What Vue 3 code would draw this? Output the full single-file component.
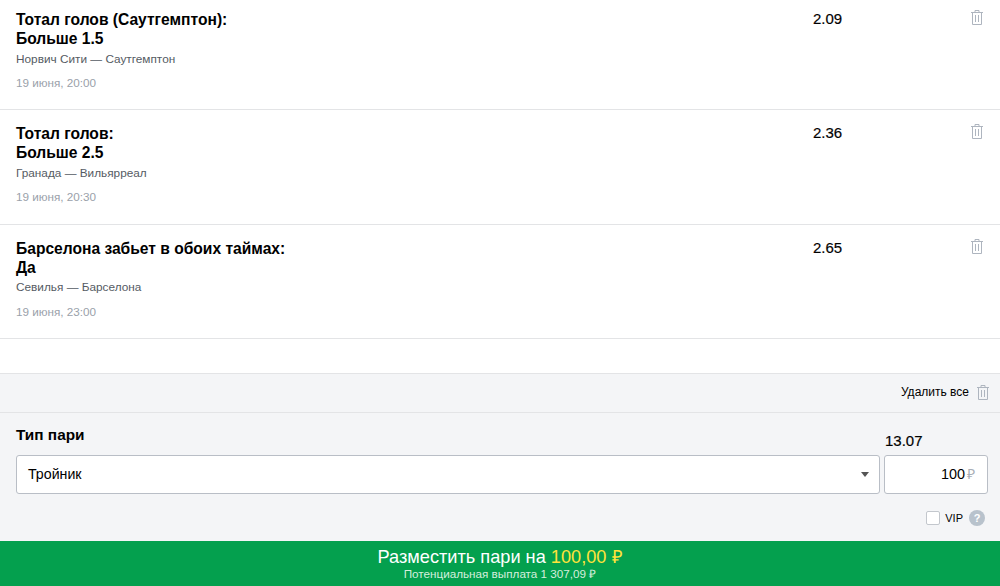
<script setup>
const bets = [
  { title: 'Тотал голов (Саутгемптон):', pick: 'Больше 1.5', match: 'Норвич Сити — Саутгемптон', date: '19 июня, 20:00', odds: '2.09' },
  { title: 'Тотал голов:', pick: 'Больше 2.5', match: 'Гранада — Вильярреал', date: '19 июня, 20:30', odds: '2.36' },
  { title: 'Барселона забьет в обоих таймах:', pick: 'Да', match: 'Севилья — Барселона', date: '19 июня, 23:00', odds: '2.65' }
]
</script>

<template>
  <div class="slip">
    <div class="list">
      <div v-for="bet in bets" :key="bet.title" class="bet">
        <div class="info">
          <div class="title">{{ bet.title }}<br>{{ bet.pick }}</div>
          <div class="match">{{ bet.match }}</div>
          <div class="date">{{ bet.date }}</div>
        </div>
        <div class="odds">{{ bet.odds }}</div>
        <svg class="trash" width="12" height="15" viewBox="0 0 12 15" fill="none" stroke="#aeb5bf" stroke-width="1">
          <path d="M0 2.5H12M4 2.5V0.5H8V2.5M1.5 2.5V14.5H10.5V2.5M4.5 5V12M7.5 5V12" />
        </svg>
      </div>
    </div>
    <div class="spacer"></div>
    <div class="clear-row">
      <span>Удалить все</span>
      <svg width="12" height="15" viewBox="0 0 12 15" fill="none" stroke="#aeb5bf" stroke-width="1">
        <path d="M0 2.5H12M4 2.5V0.5H8V2.5M1.5 2.5V14.5H10.5V2.5M4.5 5V12M7.5 5V12" />
      </svg>
    </div>
    <div class="form">
      <div class="labels">
        <span class="type-label">Тип пари</span>
        <span class="total">13.07</span>
      </div>
      <div class="inputs">
        <div class="select">
          <span>Тройник</span>
          <i class="arrow"></i>
        </div>
        <div class="amount">100<span class="rub">₽</span></div>
      </div>
      <div class="vip">
        <i class="check"></i>
        <span>VIP</span>
        <i class="help">?</i>
      </div>
    </div>
    <div class="place">
      <div class="place-main">Разместить пари на <span class="sum">100,00 ₽</span></div>
      <div class="place-sub">Потенциальная выплата 1 307,09 ₽</div>
    </div>
  </div>
</template>

<style scoped>
.slip {
  width: 1000px;
  height: 586px;
  display: flex;
  flex-direction: column;
  overflow: hidden;
  background: #fff;
  color: #000;
  font-family: "Liberation Sans", Arial, sans-serif;
}
.list {
  margin-top: -4px;
}
.bet {
  height: 114.4px;
  box-sizing: border-box;
  border-bottom: 1px solid #e3e4e6;
  display: flex;
  align-items: flex-start;
  padding: 14px 16px 0;
  position: relative;
}
.info {
  width: 797px;
}
.title {
  font-size: 15.6px;
  font-weight: 700;
  line-height: 19px;
}
.match {
  font-size: 11.8px;
  line-height: 16px;
  margin-top: 2.5px;
  color: #555b63;
}
.date {
  font-size: 11.7px;
  line-height: 16px;
  margin-top: 8.5px;
  color: #9aa1aa;
}
.odds {
  font-size: 15px;
  line-height: 18px;
  -webkit-text-stroke: 0.2px #111;
}
.trash {
  position: absolute;
  right: 17px;
  top: 14px;
}
.spacer {
  height: 34px;
}
.clear-row {
  height: 40px;
  box-sizing: border-box;
  background: #f4f5f7;
  border-top: 1px solid #e3e4e6;
  border-bottom: 1px solid #e3e4e6;
  display: flex;
  align-items: center;
  justify-content: flex-end;
  gap: 8px;
  padding: 0 11px 2px 0;
  font-size: 12px;
}
.form {
  flex: 1;
  background: #f4f5f7;
  padding: 0 12px 0 16px;
}
.labels {
  display: flex;
  justify-content: space-between;
  height: 42px;
  align-items: flex-start;
}
.type-label {
  font-size: 15.4px;
  font-weight: 700;
  margin-top: 13px;
}
.total {
  font-size: 15px;
  width: 103px;
  margin-top: 19px;
  -webkit-text-stroke: 0.2px #111;
}
.inputs {
  display: flex;
  gap: 4px;
}
.select,
.amount {
  height: 39px;
  box-sizing: border-box;
  background: #fff;
  border: 1px solid #b9bec6;
  border-radius: 3px;
  display: flex;
  align-items: center;
  padding-bottom: 2px;
  font-size: 14.2px;
}
.select {
  flex: 1;
  justify-content: space-between;
  padding-left: 11px;
  padding-right: 10px;
}
.arrow {
  width: 0;
  height: 0;
  margin-top: 2px;
  border-left: 4px solid transparent;
  border-right: 4px solid transparent;
  border-top: 5px solid #555;
}
.amount {
  width: 104px;
  justify-content: flex-end;
  padding-right: 12px;
  font-size: 14.4px;
}
.rub {
  color: #a8aeb6;
  font-size: 14px;
  margin-left: 2px;
}
.vip {
  display: flex;
  align-items: center;
  justify-content: flex-end;
  gap: 5px;
  margin-top: 16px;
  padding-right: 3px;
  font-size: 11px;
}
.check {
  width: 12px;
  height: 12px;
  background: #fff;
  border: 1px solid #c3c7cd;
  border-radius: 2px;
}
.help {
  width: 16px;
  height: 16px;
  margin-left: 1px;
  border-radius: 50%;
  background: #b8c2cc;
  color: #fff;
  font-style: normal;
  font-weight: 700;
  font-size: 11px;
  text-align: center;
  line-height: 16px;
}
.place {
  height: 45px;
  background: #04a04e;
  color: #fff;
  text-align: center;
  padding-top: 6px;
  box-sizing: border-box;
}
.place-main {
  font-size: 18.2px;
  line-height: 20px;
}
.sum {
  color: #ffe33b;
}
.place-sub {
  font-size: 11.7px;
  line-height: 14px;
  color: #d5eedd;
}
</style>
